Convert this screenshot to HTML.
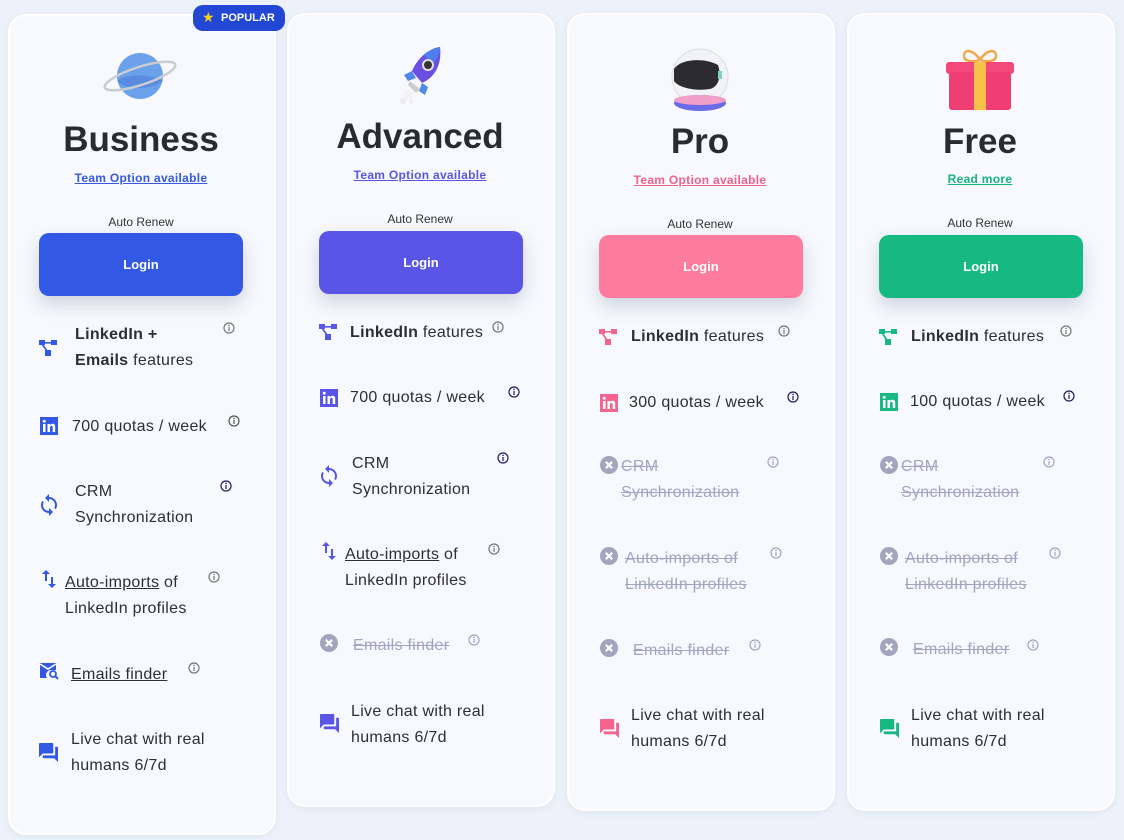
<!DOCTYPE html>
<html><head><meta charset="utf-8"><style>
*{margin:0;padding:0;box-sizing:border-box}
body{width:1124px;height:840px;background:#edf1f9;font-family:"Liberation Sans",sans-serif;position:relative;overflow:hidden;color:#2b2b33}
.card{position:absolute;background:#f7f9fe;border:2px solid #fff;border-radius:18px;box-shadow:0 2px 8px rgba(40,60,120,.06)}
.a{position:absolute}
.t{position:absolute;font-size:16px;letter-spacing:.3px;line-height:26px;color:#2e2e36;white-space:nowrap}
.t b{font-weight:600}
.title{position:absolute;width:266px;text-align:center;font-size:35px;font-weight:bold;color:#2a2b30}
.link{position:absolute;width:266px;text-align:center;font-size:12px;letter-spacing:.3px;font-weight:bold;text-decoration:underline}
.ar{position:absolute;width:266px;text-align:center;font-size:12px;color:#333}
.btn{position:absolute;width:204px;height:63px;border-radius:10px;color:#fff;font-weight:bold;font-size:13px;text-align:center;line-height:63px;box-shadow:0 8px 18px rgba(30,40,80,.18)}
.s{color:#a2a5c2;text-decoration:line-through}
.u{text-decoration:underline}
</style></head><body>
<svg width="0" height="0" style="position:absolute"><defs>
<symbol id="tree" viewBox="0 0 18 16"><rect x="0" y="0" width="6" height="5"/><rect x="12" y="0" width="6" height="5"/><rect x="6" y="10" width="6" height="6"/><rect x="5" y="2" width="8" height="1.6"/><path d="M3 4l5 7" stroke="currentColor" stroke-width="1.6"/></symbol>
<symbol id="li" viewBox="0 0 18 18"><rect width="18" height="18"/><rect x="3" y="7" width="2.5" height="8" fill="#fff"/><circle cx="4.25" cy="4.3" r="1.5" fill="#fff"/><path d="M7.5 7h2.4v1.2c.6-1 1.6-1.4 2.7-1.4 2 0 2.6 1.3 2.6 3.3V15h-2.5v-4.3c0-1-.2-1.8-1.2-1.8-1.1 0-1.5.8-1.5 1.9V15H7.5z" fill="#fff"/></symbol>
<symbol id="sync" viewBox="3 1 18 22"><path d="M12 4V1L8 5l4 4V6c3.31 0 6 2.69 6 6 0 1.01-.25 1.97-.7 2.8l1.46 1.46C19.540 15.03 20 13.57 20 12c0-4.42-3.58-8-8-8zm0 14c-3.31 0-6-2.69-6-6 0-1.01.25-1.97.7-2.8L5.24 7.74C4.46 8.97 4 10.43 4 12c0 4.42 3.58 8 8 8v3l4-4-4-4v3z"/></symbol>
<symbol id="ie" viewBox="4 3 16 18"><path d="M9 3L5 6.99h3V14h2V6.99h3L9 3zm7 14.01V10h-2v7.01h-3L15 21l4-3.99h-3z"/></symbol>
<symbol id="chat" viewBox="2 2 20 20"><path d="M21 6h-2v9H6v2c0 .55.45 1 1 1h11l4 4V7c0-.55-.45-1-1-1zm-4 6V3c0-.55-.45-1-1-1H3c-.55 0-1 .45-1 1v14l4-4h10c.55 0 1-.45 1-1z"/></symbol>
<symbol id="mail" viewBox="0 0 20 18"><path d="M1 1h16v7h-5a5 5 0 0 0-4 8H1z"/><path d="M1 2l8 5 8-5" stroke="#fff" stroke-width="1.6" fill="none"/><circle cx="14" cy="12" r="3" fill="none" stroke="currentColor" stroke-width="1.8"/><path d="M16 14l3 3" stroke="currentColor" stroke-width="2"/></symbol>
<symbol id="info" viewBox="0 0 12 12"><circle cx="6" cy="6" r="5" fill="none" stroke="currentColor" stroke-width="1.2"/><rect x="5.4" y="5" width="1.2" height="4"/><circle cx="6" cy="3.4" r=".8"/></symbol>
<symbol id="x" viewBox="0 0 18 18"><circle cx="9" cy="9" r="9" fill="#a3a5bd"/><path d="M5.8 5.8l6.4 6.4M12.2 5.8l-6.4 6.4" stroke="#fff" stroke-width="2.2"/></symbol>
</defs></svg>

<!-- Card 1 -->
<div class="card" style="left:8px;top:14px;width:268px;height:821px"></div>
<div class="a" style="left:193px;top:5px;width:92px;height:26px;background:#2347d5;border-radius:10px;color:#fff;font-size:11px;font-weight:bold;line-height:26px;padding-left:28px">POPULAR</div>
<div class="a" style="left:202px;top:10px;color:#f3d21c;font-size:14px;line-height:14px">★</div>
<svg class="a" style="left:102px;top:52px" width="76" height="50"><circle cx="38" cy="24" r="23" fill="#6aa1ea"/><path d="M16 28c10-6 30-6 44 0v2c-14 8-34 8-44 0z" fill="#5b8be0"/><ellipse cx="38" cy="24" rx="37" ry="9" transform="rotate(-18 38 24)" fill="none" stroke="#c9ccd2" stroke-width="2.5"/></svg>
<div class="title" style="left:8px;top:120px">Business</div>
<div class="link" style="left:8px;top:171px;color:#3559e0">Team Option available</div>
<div class="ar" style="left:8px;top:215px">Auto Renew</div>
<div class="btn" style="left:39px;top:233px;background:#3358e6">Login</div>
<svg class="a" style="left:39px;top:340px;color:#3358e6;fill:#3358e6" width="18" height="16"><use href="#tree"/></svg>
<div class="t" style="left:75px;top:322px"><b>LinkedIn +</b><br><b>Emails</b> features</div>
<svg class="a" style="left:223px;top:322px;color:#777;fill:#777" width="12" height="12"><use href="#info"/></svg>
<svg class="a" style="left:40px;top:417px;fill:#3358e6" width="18" height="18"><use href="#li"/></svg>
<div class="t" style="left:72px;top:414px">700 quotas / week</div>
<svg class="a" style="left:228px;top:415px;color:#555;fill:#555" width="12" height="12"><use href="#info"/></svg>
<svg class="a" style="left:39px;top:494px;fill:#3358e6" width="20" height="22"><use href="#sync"/></svg>
<div class="t" style="left:75px;top:479px">CRM<br>Synchronization</div>
<svg class="a" style="left:220px;top:480px;color:#1c1d5a;fill:#1c1d5a" width="12" height="12"><use href="#info"/></svg>
<svg class="a" style="left:41px;top:570px;fill:#3358e6" width="16" height="18"><use href="#ie"/></svg>
<div class="t" style="left:65px;top:570px"><span class="u">Auto-imports</span> of<br>LinkedIn profiles</div>
<svg class="a" style="left:208px;top:571px;color:#777;fill:#777" width="12" height="12"><use href="#info"/></svg>
<svg class="a" style="left:39px;top:662px;color:#3358e6;fill:#3358e6" width="20" height="18"><use href="#mail"/></svg>
<div class="t" style="left:71px;top:662px"><span class="u">Emails finder</span></div>
<svg class="a" style="left:188px;top:662px;color:#777;fill:#777" width="12" height="12"><use href="#info"/></svg>
<svg class="a" style="left:39px;top:743px;fill:#3358e6" width="19" height="19"><use href="#chat"/></svg>
<div class="t" style="left:71px;top:727px">Live chat with real<br>humans 6/7d</div>

<!-- Card 2 -->
<div class="card" style="left:287px;top:13px;width:268px;height:794px"></div>
<svg class="a" style="left:396px;top:45px" width="50" height="62"><path d="M44 2C34 3 22 12 16 26l10 12c13-6 20-18 18-36z" fill="#6a4fe0"/><path d="M44 2c-6 1-12 4-16 8l8 9c5-4 8-11 8-17z" fill="#4f7ef0"/><circle cx="32" cy="20" r="5" fill="#333" stroke="#ddd" stroke-width="2"/><path d="M16 26l-8 4 4 6 8-3zM26 38l-3 8 6 4 3-8z" fill="#4f8ae8"/><path d="M14 36l10 8-4 4-8-8z" fill="#ccc"/><circle cx="12" cy="50" r="5" fill="#f2f2f5"/><circle cx="7" cy="56" r="3" fill="#eee"/><circle cx="15" cy="57" r="2" fill="#eee"/></svg>
<div class="title" style="left:287px;top:117px">Advanced</div>
<div class="link" style="left:287px;top:168px;color:#5a55e6">Team Option available</div>
<div class="ar" style="left:287px;top:212px">Auto Renew</div>
<div class="btn" style="left:319px;top:231px;background:#5b55e7">Login</div>
<svg class="a" style="left:319px;top:324px;color:#5a55e6;fill:#5a55e6" width="18" height="16"><use href="#tree"/></svg>
<div class="t" style="left:350px;top:320px"><b>LinkedIn</b> features</div>
<svg class="a" style="left:492px;top:321px;color:#777;fill:#777" width="12" height="12"><use href="#info"/></svg>
<svg class="a" style="left:320px;top:389px;fill:#5a55e6" width="18" height="18"><use href="#li"/></svg>
<div class="t" style="left:350px;top:385px">700 quotas / week</div>
<svg class="a" style="left:508px;top:386px;color:#1c1d5a;fill:#1c1d5a" width="12" height="12"><use href="#info"/></svg>
<svg class="a" style="left:319px;top:465px;fill:#5a55e6" width="20" height="22"><use href="#sync"/></svg>
<div class="t" style="left:352px;top:451px">CRM<br>Synchronization</div>
<svg class="a" style="left:497px;top:452px;color:#1c1d5a;fill:#1c1d5a" width="12" height="12"><use href="#info"/></svg>
<svg class="a" style="left:321px;top:542px;fill:#5a55e6" width="16" height="18"><use href="#ie"/></svg>
<div class="t" style="left:345px;top:542px"><span class="u">Auto-imports</span> of<br>LinkedIn profiles</div>
<svg class="a" style="left:488px;top:543px;color:#777;fill:#777" width="12" height="12"><use href="#info"/></svg>
<svg class="a" style="left:320px;top:634px" width="18" height="18"><use href="#x"/></svg>
<div class="t s" style="left:353px;top:633px">Emails finder</div>
<svg class="a" style="left:468px;top:634px;color:#a2a5c2;fill:#a2a5c2" width="12" height="12"><use href="#info"/></svg>
<svg class="a" style="left:320px;top:714px;fill:#5a55e6" width="19" height="19"><use href="#chat"/></svg>
<div class="t" style="left:351px;top:699px">Live chat with real<br>humans 6/7d</div>

<!-- Card 3 -->
<div class="card" style="left:567px;top:13px;width:268px;height:798px"></div>
<svg class="a" style="left:668px;top:47px" width="64" height="66"><ellipse cx="32" cy="30" rx="28" ry="28" fill="#f2f3f6" stroke="#ddd"/><path d="M6 22c6-10 30-12 44-4 4 12 0 22-8 24-12 2-30 0-36-8z" fill="#2c2c30"/><ellipse cx="32" cy="56" rx="26" ry="8" fill="#6b6ae8"/><ellipse cx="32" cy="53" rx="26" ry="5" fill="#ef9fc8"/><rect x="50" y="24" width="4" height="8" fill="#7ed3c2"/></svg>
<div class="title" style="left:567px;top:122px">Pro</div>
<div class="link" style="left:567px;top:173px;color:#f0628a">Team Option available</div>
<div class="ar" style="left:567px;top:217px">Auto Renew</div>
<div class="btn" style="left:599px;top:235px;background:#fd7b9c">Login</div>
<svg class="a" style="left:599px;top:329px;color:#f5648e;fill:#f5648e" width="18" height="16"><use href="#tree"/></svg>
<div class="t" style="left:631px;top:324px"><b>LinkedIn</b> features</div>
<svg class="a" style="left:778px;top:325px;color:#777;fill:#777" width="12" height="12"><use href="#info"/></svg>
<svg class="a" style="left:600px;top:394px;fill:#f5648e" width="18" height="18"><use href="#li"/></svg>
<div class="t" style="left:629px;top:390px">300 quotas / week</div>
<svg class="a" style="left:787px;top:391px;color:#1c1d5a;fill:#1c1d5a" width="12" height="12"><use href="#info"/></svg>
<svg class="a" style="left:600px;top:456px" width="18" height="18"><use href="#x"/></svg>
<div class="t s" style="left:621px;top:454px">CRM<br>Synchronization</div>
<svg class="a" style="left:767px;top:456px;color:#a2a5c2;fill:#a2a5c2" width="12" height="12"><use href="#info"/></svg>
<svg class="a" style="left:600px;top:547px" width="18" height="18"><use href="#x"/></svg>
<div class="t s" style="left:625px;top:546px">Auto-imports of<br>LinkedIn profiles</div>
<svg class="a" style="left:770px;top:547px;color:#a2a5c2;fill:#a2a5c2" width="12" height="12"><use href="#info"/></svg>
<svg class="a" style="left:600px;top:639px" width="18" height="18"><use href="#x"/></svg>
<div class="t s" style="left:633px;top:638px">Emails finder</div>
<svg class="a" style="left:749px;top:639px;color:#a2a5c2;fill:#a2a5c2" width="12" height="12"><use href="#info"/></svg>
<svg class="a" style="left:600px;top:719px;fill:#f5648e" width="19" height="19"><use href="#chat"/></svg>
<div class="t" style="left:631px;top:703px">Live chat with real<br>humans 6/7d</div>

<!-- Card 4 -->
<div class="card" style="left:847px;top:13px;width:268px;height:798px"></div>
<svg class="a" style="left:945px;top:46px" width="70" height="64"><path d="M35 14c-6-10-16-12-16-4 0 6 10 6 16 4zm0 0c6-10 16-12 16-4 0 6-10 6-16 4z" fill="none" stroke="#f0a84a" stroke-width="2.5"/><rect x="1" y="16" width="68" height="12" rx="3" fill="#f5487a"/><rect x="4" y="26" width="62" height="38" rx="3" fill="#ef3f72"/><rect x="29" y="16" width="12" height="48" fill="#f8c24a"/></svg>
<div class="title" style="left:847px;top:122px">Free</div>
<div class="link" style="left:847px;top:172px;color:#17b37a">Read more</div>
<div class="ar" style="left:847px;top:216px">Auto Renew</div>
<div class="btn" style="left:879px;top:235px;background:#16b982">Login</div>
<svg class="a" style="left:879px;top:329px;color:#17b881;fill:#17b881" width="18" height="16"><use href="#tree"/></svg>
<div class="t" style="left:911px;top:324px"><b>LinkedIn</b> features</div>
<svg class="a" style="left:1060px;top:325px;color:#777;fill:#777" width="12" height="12"><use href="#info"/></svg>
<svg class="a" style="left:880px;top:393px;fill:#17b881" width="18" height="18"><use href="#li"/></svg>
<div class="t" style="left:910px;top:389px">100 quotas / week</div>
<svg class="a" style="left:1063px;top:390px;color:#1c1d5a;fill:#1c1d5a" width="12" height="12"><use href="#info"/></svg>
<svg class="a" style="left:880px;top:456px" width="18" height="18"><use href="#x"/></svg>
<div class="t s" style="left:901px;top:454px">CRM<br>Synchronization</div>
<svg class="a" style="left:1043px;top:456px;color:#a2a5c2;fill:#a2a5c2" width="12" height="12"><use href="#info"/></svg>
<svg class="a" style="left:880px;top:547px" width="18" height="18"><use href="#x"/></svg>
<div class="t s" style="left:905px;top:546px">Auto-imports of<br>LinkedIn profiles</div>
<svg class="a" style="left:1049px;top:547px;color:#a2a5c2;fill:#a2a5c2" width="12" height="12"><use href="#info"/></svg>
<svg class="a" style="left:880px;top:638px" width="18" height="18"><use href="#x"/></svg>
<div class="t s" style="left:913px;top:637px">Emails finder</div>
<svg class="a" style="left:1027px;top:639px;color:#a2a5c2;fill:#a2a5c2" width="12" height="12"><use href="#info"/></svg>
<svg class="a" style="left:880px;top:719px;fill:#17b881" width="19" height="19"><use href="#chat"/></svg>
<div class="t" style="left:911px;top:703px">Live chat with real<br>humans 6/7d</div>
</body></html>
